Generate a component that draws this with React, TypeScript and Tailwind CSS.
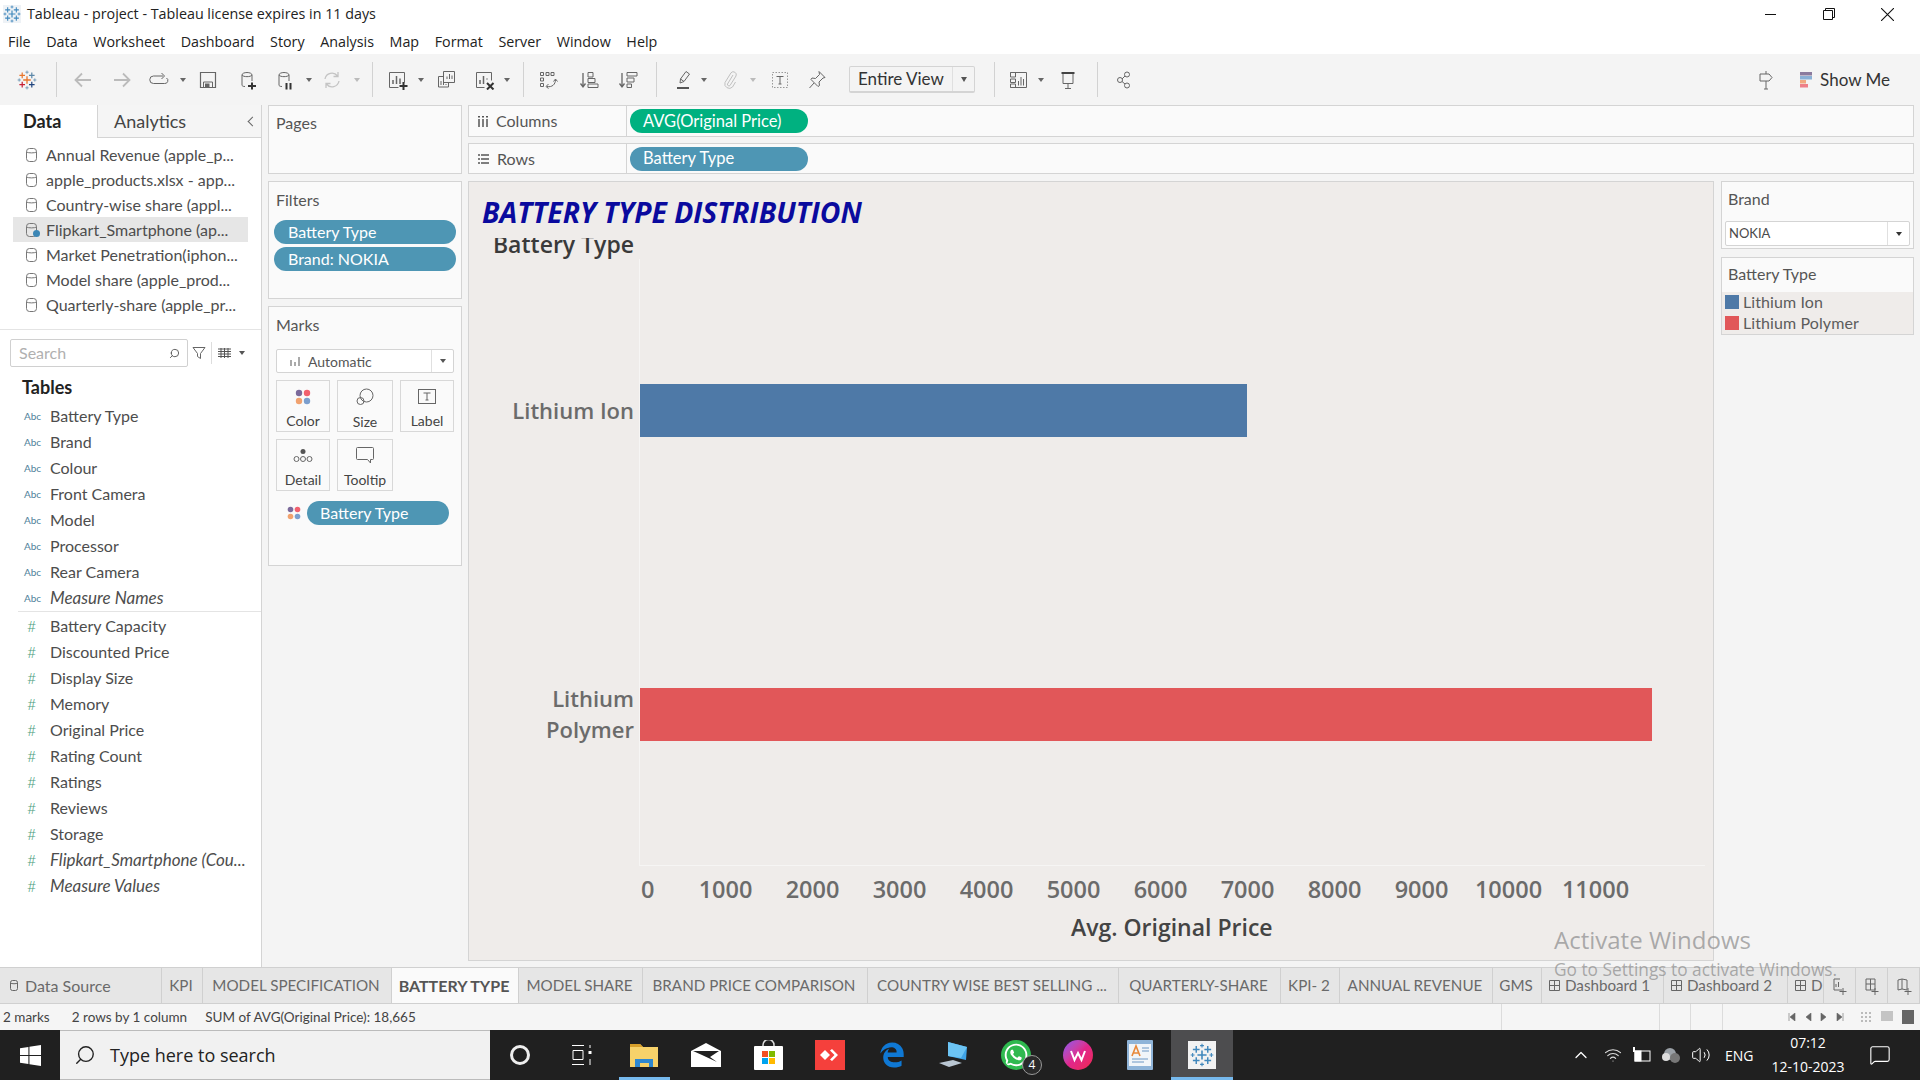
import React from 'react';
import { Search, ChevronUp, Volume2, Wifi, MessageSquare } from 'lucide-react';
import { FaWhatsapp, FaEdgeLegacy } from 'react-icons/fa';

// ---- data ----------------------------------------------------------------
const SOURCES = [
  'Annual Revenue (apple_p...',
  'apple_products.xlsx - app...',
  'Country-wise share (appl...',
  'Flipkart_Smartphone (ap...',
  'Market Penetration(iphon...',
  'Model share (apple_prod...',
  'Quarterly-share (apple_pr...',
];
const DIMENSIONS = ['Battery Type', 'Brand', 'Colour', 'Front Camera', 'Model', 'Processor', 'Rear Camera'];
const MEASURES = [
  'Battery Capacity',
  'Discounted Price',
  'Display Size',
  'Memory',
  'Original Price',
  'Rating Count',
  'Ratings',
  'Reviews',
  'Storage',
];
const MENU = ['File', 'Data', 'Worksheet', 'Dashboard', 'Story', 'Analysis', 'Map', 'Format', 'Server', 'Window', 'Help'];
const TICKS = ['1000', '2000', '3000', '4000', '5000', '6000', '7000', '8000', '9000', '10000', '11000'];
const TABS = [
  { label: 'KPI', w: 'w-[41px]' },
  { label: 'MODEL SPECIFICATION', w: 'w-[189px]' },
  { label: 'BATTERY TYPE', w: 'w-[127px]', active: true },
  { label: 'MODEL SHARE', w: 'w-[124px]' },
  { label: 'BRAND PRICE COMPARISON', w: 'w-[225px]' },
  { label: 'COUNTRY WISE BEST SELLING ...', w: 'w-[251px]' },
  { label: 'QUARTERLY-SHARE', w: 'w-[162px]' },
  { label: 'KPI- 2', w: 'w-[59px]' },
  { label: 'ANNUAL REVENUE', w: 'w-[153px]' },
  { label: 'GMS', w: 'w-[49px]' },
];

// ---- small drawings --------------------------------------------------------
const Ico: React.FC<{ ml: string; children: React.ReactNode; stroke?: string }> = ({ ml, children, stroke = '#666' }) => (
  <svg viewBox="0 0 20 20" fill="none" stroke={stroke} strokeWidth="1" className={`w-5 h-5 shrink-0 ${ml}`}>
    {children}
  </svg>
);
const Caret: React.FC<{ ml: string; light?: boolean }> = ({ ml, light }) => (
  <div className={`w-2 shrink-0 flex justify-center ${ml}`}>
    <div className={`w-0 h-0 border-x-[3px] border-x-transparent border-t-[4px] ${light ? 'border-t-[#bbb]' : 'border-t-[#666]'}`} />
  </div>
);
const Sep: React.FC<{ ml: string }> = ({ ml }) => <div className={`w-px h-[35px] bg-[#d2d2d2] shrink-0 ${ml}`} />;

const Dots: React.FC<{ size?: string }> = ({ size = 'w-[16px] h-[16px]' }) => (
  <svg viewBox="0 0 16 16" className={size}>
    <circle cx="4" cy="4" r="3.2" fill="#7b6a9b" />
    <circle cx="12" cy="4" r="3.2" fill="#f1616f" />
    <circle cx="4" cy="12" r="3.2" fill="#f1a26f" />
    <circle cx="12" cy="12" r="3.2" fill="#7c9fce" />
  </svg>
);

const TableauLogo: React.FC<{ className?: string; mono?: boolean }> = ({ className, mono }) => {
  const cross = (cx: number, cy: number, r: number, color: string, w: number) => (
    <path d={`M${cx - r} ${cy}H${cx + r}M${cx} ${cy - r}V${cy + r}`} stroke={color} strokeWidth={w} />
  );
  const m = '#3f87bc';
  return (
    <svg viewBox="0 0 20 20" className={className} fill="none">
      {cross(10, 10, 3.8, mono ? m : '#e8762c', 1.3)}
      {cross(5.2, 5.4, 2.8, mono ? m : '#e8762c', 1.2)}
      {cross(14.8, 5.4, 2.8, mono ? m : '#5b87a8', 1.2)}
      {cross(5.2, 14.6, 2.8, mono ? m : '#c72035', 1.2)}
      {cross(14.8, 14.6, 2.8, mono ? m : '#1f447e', 1.2)}
      {cross(10, 2.2, 1.6, mono ? m : '#7099b5', 0.9)}
      {cross(10, 17.8, 1.6, mono ? m : '#7099b5', 0.9)}
      {cross(2.2, 10, 1.6, mono ? m : '#7099b5', 0.9)}
      {cross(17.8, 10, 1.6, mono ? m : '#7099b5', 0.9)}
    </svg>
  );
};

const Cylinder: React.FC<{ check?: boolean }> = ({ check }) => (
  <div className="relative w-[11px] h-[14px] shrink-0">
    <svg viewBox="0 0 11 14" fill="none" stroke="#777" strokeWidth="1" className="w-[11px] h-[14px]">
      <rect x="0.5" y="0.5" width="10" height="13" rx="3" />
      <path d="M0.5 4c2 1.2 8 1.2 10 0" />
    </svg>
    {check && <div className="absolute -right-[3px] bottom-0 w-[7px] h-[7px] rounded-full bg-[#3b86b5]" />}
  </div>
);

// ---- toolbar ---------------------------------------------------------------
const Toolbar = () => (
  <div className="h-[51px] bg-[#f4f4f4] flex items-center shrink-0">
    <TableauLogo className="w-5 h-5 shrink-0 ml-[17px]" />
    <Sep ml="ml-[19px]" />
    <Ico ml="ml-[16px]" stroke="#bbb"><path d="M18 10H2.500M9 3.500L2.500 10 9 16.500" strokeWidth="1.800" /></Ico>
    <Ico ml="ml-[19px]" stroke="#bbb"><path d="M2 10h15.500M11 3.500l6.500 6.500-6.500 6.500" strokeWidth="1.800" /></Ico>
    <Ico ml="ml-[17px]"><path d="M14 6H4.500a3 3 0 0 0 0 7.500h11a3 3 0 0 0 2-5.500" /><path d="M12.500 3l3 3-3 3" /></Ico>
    <Caret ml="ml-[10px]" />
    <Ico ml="ml-[11px]"><path d="M2.500 2.500h15v15h-15z" strokeWidth="1.200" /><path d="M5.500 17v-5h9v5" /><rect x="7.500" y="14" width="3.500" height="3" fill="#666" /></Ico>
    <Ico ml="ml-[20px]"><path d="M4 5c0-3.300 10-3.300 10 0v6M4 5v10c0 1 1 1.500 3 1.500M4 5c1 2.200 9 2.200 10 0" /><path d="M10 16h8M14 12.500v7" stroke="#333" strokeWidth="2" /></Ico>
    <Ico ml="ml-[17px]"><path d="M4 5c0-3.300 10-3.300 10 0v6M4 5v10c0 1 1 1.500 3 1.500M4 5c1 2.200 9 2.200 10 0" /><path d="M11.500 13v6.500M15.500 13v6.500" stroke="#333" strokeWidth="2" /></Ico>
    <Caret ml="ml-[10px]" />
    <Ico ml="ml-[9px]" stroke="#c4c4c4"><path d="M3 9a7 7 0 0 1 12.500-3M17 11a7 7 0 0 1-12.500 3M16 2v4.500h-4.500M4 18v-4.500h4.500" strokeWidth="1.300" /></Ico>
    <Caret ml="ml-[11px]" light />
    <Sep ml="ml-[11px]" />
    <Ico ml="ml-[15px]"><path d="M1.500 2.500h15v10M1.500 2.500v15h9" /><path d="M5 14V10M8.500 14V6M12 14V8.500" strokeWidth="1.500" /><path d="M11.500 16h8M15.500 12v8" stroke="#333" strokeWidth="2" /></Ico>
    <Caret ml="ml-[9px]" />
    <Ico ml="ml-[11px]"><path d="M7.500 1.500h11v11h-11zM7.500 6.500h-5v10.500h10v-4.500M11 9V6.500M13.500 9V4M16 9V5.500M5 15v-4M7.500 15v-3M10 15v-1" /></Ico>
    <Ico ml="ml-[19px]"><path d="M1.500 2.500h15v8M1.500 2.500v15h8" /><path d="M5 14V10M8.500 14V6M12 9.500V8.500" strokeWidth="1.500" /><path d="M12 13l6.500 6.500M18.500 13L12 19.500" stroke="#333" strokeWidth="2" /></Ico>
    <Caret ml="ml-[8px]" />
    <Sep ml="ml-[12px]" />
    <Ico ml="ml-[14px]"><path d="M2.500 2.500h3v3h-3zM8 2.500h3v3H8zM13 2.500h3v3h-3zM2.500 8h3v3h-3zM2.500 13.500h3v3h-3z" /><path d="M9 16.500c5 1 8.500-2 8.500-7M15.500 11.500l2-2.500 2 2.500M10.500 14l-2.500 2.500 2.500 2" /></Ico>
    <Ico ml="ml-[21px]"><path d="M4 3v14M1.500 13.500L4 17l2.500-3.500" strokeWidth="1.300" /><path d="M9 2.500h5v4.500H9zM9 8.500h7v4H9zM9 14h10v3.500H9z" /></Ico>
    <Ico ml="ml-[19px]"><path d="M4 3v14M1.500 13.500L4 17l2.500-3.500" strokeWidth="1.300" /><path d="M9 2.500h10v3.500H9zM9 8h7v4H9zM9 14h4.500v3.500H9z" /></Ico>
    <Sep ml="ml-[18px]" />
    <Ico ml="ml-[16px]"><path d="M7 13l.5-4L13 1.500l3.500 2.500L11 11.500zM7.500 9l3.500 2.500" strokeWidth="1" /><path d="M4 18h12" stroke="#555" strokeWidth="2" /></Ico>
    <Caret ml="ml-[7px]" />
    <Ico ml="ml-[12px]" stroke="#c0c0c0"><path d="M13 5l-5.500 9a1.500 1.500 0 0 0 2.500 1.500L16 6a3 3 0 0 0-5-3.200L5 12.500a4.500 4.500 0 0 0 7.500 4.500l3-5" /></Ico>
    <Caret ml="ml-[9px]" light />
    <Ico ml="ml-[13px]"><path d="M2.500 2.500h15v15h-15z" strokeDasharray="1.500 1.500" stroke="#999" /><path d="M6.500 6.500h7M10 6.500V14M8.500 14h3" /></Ico>
    <Ico ml="ml-[17px]"><path d="M12 1.500l6 6-2 .5-4 4 .5 3.500-1.500 1-7-7 1-1.500 3.500.5 4-4zM7 13l-4.500 5" /></Ico>
    <div className="ml-[22px] w-[126px] h-[27px] shrink-0 flex items-center border border-[#d4d4d4] border-b-2 rounded-[2px] text-[17px] text-[#333] font-['Lato',sans-serif]">
      <span className="flex-1 pl-[8px]">Entire View</span>
      <div className="w-[22px] h-full border-l border-[#e0e0e0] flex items-center justify-center">
        <div className="w-0 h-0 border-x-[3px] border-x-transparent border-t-[5px] border-t-[#555]" />
      </div>
    </div>
    <Sep ml="ml-[19px]" />
    <Ico ml="ml-[14px]"><path d="M1.500 2.500h16v15h-16M1.500 2.500h5v4.500h-5zM1.500 9h5v3.500h-5zM1.500 14h5v3.500h-5zM9.500 15.500V11M12 15.500V7M14.500 15.500V9" /></Ico>
    <Caret ml="ml-[8px]" />
    <Ico ml="ml-[13px]"><path d="M5 3v10.500h10V3M10 13.500v4.500M7 18.500h6" /><path d="M3.500 3h13" stroke="#444" strokeWidth="2" /></Ico>
    <Sep ml="ml-[19px]" />
    <Ico ml="ml-[16px]"><circle cx="6" cy="10" r="2.500" /><circle cx="13" cy="4.500" r="2.500" /><circle cx="13" cy="15.500" r="2.500" /><path d="M8 9l3-3M8 11.500l3 2.500" /></Ico>
    <Ico ml="ml-auto"><path d="M10 1v3M4 4h9l3 3.500-3 3.500H4zM10 11v8M8 19h4" /></Ico>
    <svg viewBox="0 0 12 16" className="w-[12px] h-[16px] ml-[24px] shrink-0">
      <rect width="12" height="3.500" fill="#8b7b9e" />
      <rect y="4" width="12" height="3.500" fill="#8ab0d6" />
      <rect y="8" width="6" height="3.500" fill="#f1a97f" />
      <rect y="12" width="8" height="3.500" fill="#ee7f88" />
    </svg>
    <span className="ml-[8px] mr-[30px] text-[17px] text-[#333] font-['Lato',sans-serif]">Show Me</span>
  </div>
);

// ---- left data pane --------------------------------------------------------
const DataPane = () => (
  <div className="w-[262px] shrink-0 bg-white border-r border-[#d4d4d4] flex flex-col text-[16px] text-[#4d4d4d] font-['Lato',sans-serif]">
    <div className="h-[33px] flex shrink-0">
      <div className="w-[97px] pl-[23px] flex items-center text-[18px] font-bold text-[#222]">Data</div>
      <div className="flex-1 flex items-center justify-between pl-[16px] pr-[5px] bg-[#f5f5f5] border-l border-b border-[#d4d4d4] text-[18px] text-[#444]">
        Analytics
        <span className="w-[7px] h-[7px] border-l border-b border-[#666] rotate-45" />
      </div>
    </div>
    <div className="h-[192px] pt-[4px] border-b border-[#e4e4e4] shrink-0">
      {SOURCES.map((s, i) => (
        <div
          key={s}
          className={`h-[25px] ml-[13px] w-[235px] pl-[13px] flex items-center gap-[9px] whitespace-nowrap ${i === 3 ? 'bg-[#e6e6e6]' : ''}`}
        >
          <Cylinder check={i === 3} />
          {s}
        </div>
      ))}
    </div>
    <div className="flex items-center mt-[9px] pl-[10px] shrink-0">
      <div className="w-[178px] h-[28px] border border-[#d0d0d0] rounded-[2px] flex items-center justify-between pl-[8px] pr-[7px] text-[#b0b0b0]">
        Search
        <Search size={11} className="text-[#555] -scale-x-100" />
      </div>
      <svg viewBox="0 0 14 14" fill="none" stroke="#666" className="w-[14px] h-[14px] ml-[4px]"><path d="M1 1.500h12L8.500 7.500v5l-3-2v-3z" /></svg>
      <div className="w-px h-[22px] bg-[#ddd] ml-[5px]" />
      <svg viewBox="0 0 13 10" fill="none" stroke="#555" className="w-[13px] h-[10px] ml-[6px]"><path d="M0 1h13M0 3.500h13M0 6h13M0 8.500h13M3 0v10M6.500 0v10M10 0v10" strokeWidth="1" /></svg>
      <div className="ml-[8px] w-0 h-0 border-x-[3.5px] border-x-transparent border-t-[4px] border-t-[#555]" />
    </div>
    <div className="pl-[22px] mt-[7px] h-[26px] flex items-center text-[18px] font-bold text-[#222] shrink-0">Tables</div>
    <div className="pt-[3px] ml-[18px] border-b border-[#e4e4e4] shrink-0">
      {DIMENSIONS.map(d => (
        <div key={d} className="h-[26px] flex items-center whitespace-nowrap">
          <span className="w-[32px] pl-[6px] text-[10px] text-[#4f7f9a]">Abc</span>
          {d}
        </div>
      ))}
      <div className="h-[26px] flex items-center italic text-[17px]">
        <span className="w-[32px] pl-[6px] text-[10px] text-[#4f7f9a] not-italic">Abc</span>
        Measure Names
      </div>
    </div>
    <div className="pl-[26px] pt-[1px]">
      {MEASURES.map(m => (
        <div key={m} className="h-[26px] flex items-center whitespace-nowrap">
          <span className="w-[24px] pl-[1px] text-[#4a9d7c] text-[16px] font-light">#</span>
          {m}
        </div>
      ))}
      <div className="h-[26px] flex items-center italic whitespace-nowrap text-[17px]">
        <span className="w-[24px] pl-[1px] text-[#4a9d7c] text-[16px] font-light not-italic">#</span>
        Flipkart_Smartphone (Cou...
      </div>
      <div className="h-[26px] flex items-center italic text-[17px]">
        <span className="w-[24px] pl-[1px] text-[#4a9d7c] text-[16px] font-light not-italic">#</span>
        Measure Values
      </div>
    </div>
  </div>
);

// ---- shelves ---------------------------------------------------------------
const Pill: React.FC<{ label: string; className: string }> = ({ label, className }) => (
  <div className={`h-[24px] rounded-full flex items-center text-white shrink-0 ${className}`}>{label}</div>
);

const MarkBtn: React.FC<{ label: string; w: string; children: React.ReactNode }> = ({ label, w, children }) => (
  <div className={`${w} h-[52px] border border-[#d8d8d8] bg-[#fafafa] flex flex-col items-center pt-[7px] text-[14px] text-[#444]`}>
    <div className="h-[20px] flex items-center justify-center">{children}</div>
    <span className="mt-[5px]">{label}</span>
  </div>
);

const ShelfColumn = () => (
  <div className="w-[206px] shrink-0 pl-[6px] pr-[6px] flex flex-col gap-[7px] text-[16px] text-[#555] font-['Lato',sans-serif]">
    <div className="h-[69px] border border-[#d4d4d4] bg-[#fafafa] pl-[7px] pt-[5px] shrink-0">Pages</div>
    <div className="h-[118px] border border-[#d4d4d4] bg-[#fafafa] pt-[6px] shrink-0">
      <div className="pl-[7px] h-[22px]">Filters</div>
      <div className="px-[5px] mt-[10px] flex flex-col gap-[3px]">
        <Pill label="Battery Type" className="pl-[14px] bg-[#4e96b4] text-[16px]" />
        <Pill label="Brand: NOKIA" className="pl-[14px] bg-[#4e96b4] text-[16px]" />
      </div>
    </div>
    <div className="h-[260px] border border-[#d4d4d4] bg-[#fafafa] pt-[6px] shrink-0">
      <div className="pl-[7px] h-[22px]">Marks</div>
      <div className="ml-[7px] mt-[14px] w-[178px] h-[24px] border border-[#d4d4d4] rounded-[2px] bg-white flex items-center text-[14px]">
        <svg viewBox="0 0 10 10" className="w-[10px] h-[10px] ml-[13px] mr-[8px]" fill="#aaa"><path d="M0 4h2v6H0zM4 6h2v4H4zM8 1h2v9H8z" /></svg>
        <span className="flex-1">Automatic</span>
        <div className="w-[22px] h-full border-l border-[#e0e0e0] flex items-center justify-center">
          <div className="w-0 h-0 border-x-[3.5px] border-x-transparent border-t-[4px] border-t-[#555]" />
        </div>
      </div>
      <div className="ml-[7px] mt-[7px] flex gap-[7px]">
        <MarkBtn label="Color" w="w-[54px]"><Dots /></MarkBtn>
        <MarkBtn label="Size" w="w-[56px]">
          <svg viewBox="0 0 18 18" fill="none" stroke="#666" className="w-[18px] h-[18px]"><circle cx="10.500" cy="7.500" r="6.500" /><circle cx="4.500" cy="13" r="3.500" /></svg>
        </MarkBtn>
        <MarkBtn label="Label" w="w-[54px]">
          <svg viewBox="0 0 18 16" fill="none" stroke="#666" className="w-[18px] h-[16px]"><rect x="0.500" y="0.500" width="17" height="14" /><path d="M5.500 4h7M9 4v7M7.500 11h3" /></svg>
        </MarkBtn>
      </div>
      <div className="ml-[7px] mt-[7px] flex gap-[7px]">
        <MarkBtn label="Detail" w="w-[54px]">
          <svg viewBox="0 0 20 16" fill="none" stroke="#666" className="w-[20px] h-[16px]"><circle cx="10" cy="3.500" r="2.500" fill="#555" stroke="none" /><circle cx="3.500" cy="11" r="2.500" /><circle cx="10" cy="11" r="2.500" /><circle cx="16.500" cy="11" r="2.500" /></svg>
        </MarkBtn>
        <MarkBtn label="Tooltip" w="w-[56px]">
          <svg viewBox="0 0 18 17" fill="none" stroke="#666" className="w-[18px] h-[17px]"><path d="M1.500 0.500h15a1 1 0 0 1 1 1v10a1 1 0 0 1-1 1h-2v3.500l-3-3.500h-10a1 1 0 0 1-1-1v-10a1 1 0 0 1 1-1z" /></svg>
        </MarkBtn>
      </div>
      <div className="mt-[10px] ml-[18px] flex items-center gap-[6px]">
        <Dots size="w-[14px] h-[14px]" />
        <Pill label="Battery Type" className="pl-[13px] w-[142px] bg-[#4e96b4] text-[16px]" />
      </div>
    </div>
  </div>
);

const Shelf: React.FC<{ label: string; icon: React.ReactNode; h: string; pill: string; color: string }> = ({ label, icon, h, pill, color }) => (
  <div className={`${h} shrink-0 border border-[#d4d4d4] bg-[#fafafa] flex items-center font-['Lato',sans-serif] text-[16px] text-[#555]`}>
    <div className="w-[158px] h-full border-r border-[#d4d4d4] flex items-center pl-[9px] gap-[8px]">
      {icon}
      {label}
    </div>
    <Pill label={pill} className={`ml-[3px] pl-[13px] w-[178px] text-[16.5px] ${color}`} />
  </div>
);

// ---- viz -------------------------------------------------------------------
const BarRow: React.FC<{ bar: string; children: React.ReactNode }> = ({ bar, children }) => (
  <div className="flex-1 flex items-center">
    <div className="w-[171px] pr-[6px] text-right text-[22px] leading-[31px] font-semibold text-[#6b6b6b]">{children}</div>
    <div className={`h-[53px] ${bar}`} />
  </div>
);

const Viz = () => (
  <div className="flex-1 bg-[#efecea] border border-[#d4d4d4] flex flex-col font-['Open_Sans',sans-serif] overflow-hidden">
    <div className="h-[56px] pt-[14px] pl-[13px] shrink-0 text-[28.3px] leading-[32px] font-bold italic text-[#0a0a9e] whitespace-nowrap">
      BATTERY TYPE DISTRIBUTION
    </div>
    <div className="h-[21px] w-[165px] shrink-0 overflow-hidden flex items-end justify-end text-[23px] leading-[30px] font-semibold text-[#3a3a3a] whitespace-nowrap">
      <span className="shrink-0">Battery Type</span>
    </div>
    <div className="h-[607px] shrink-0 flex flex-col relative">
      <div className="absolute left-[170px] top-0 bottom-0 w-px bg-[#f6f5f4]" />
      <div className="absolute left-[170px] right-[8px] bottom-0 h-px bg-[#f6f5f4]" />
      <BarRow bar="w-[607px] bg-[#4e79a7]">Lithium Ion</BarRow>
      <BarRow bar="w-[1012px] bg-[#e15759]">Lithium<br />Polymer</BarRow>
    </div>
    <div className="flex pl-[171px] mt-[8px] text-[23.5px] leading-[31px] font-semibold text-[#6b6b6b] shrink-0">
      <span className="w-[42px] pl-[1px]">0</span>
      {TICKS.map(t => (
        <span key={t} className="w-[87px] text-center shrink-0">{t}</span>
      ))}
    </div>
    <div className="mt-[7px] pl-[602px] text-[23px] leading-[30px] font-semibold text-[#444] whitespace-nowrap">Avg. Original Price</div>
  </div>
);

const SidePanel = () => (
  <div className="w-[193px] shrink-0 flex flex-col gap-[8px] font-['Lato',sans-serif] text-[16px] text-[#555]">
    <div className="h-[68px] border border-[#d4d4d4] bg-[#fafafa] shrink-0">
      <div className="pl-[6px] pt-[5px] h-[39px]">Brand</div>
      <div className="mx-[3px] h-[25px] border border-[#d4d4d4] rounded-[2px] bg-white flex items-center text-[13px] text-[#4a4a4a]">
        <span className="flex-1 pl-[3px]">NOKIA</span>
        <div className="w-[22px] h-full border-l border-[#e0e0e0] flex items-center justify-center">
          <div className="w-0 h-0 border-x-[3.500px] border-x-transparent border-t-[4px] border-t-[#333]" />
        </div>
      </div>
    </div>
    <div className="h-[78px] border border-[#d4d4d4] bg-[#fafafa] shrink-0 flex flex-col">
      <div className="pl-[6px] pt-[4px] h-[34px] shrink-0">Battery Type</div>
      <div className="flex-1 bg-[#efecea] pl-[3px] text-[#5c5c5c] tracking-[0.1px]">
        <div className="h-[21px] -mt-px flex items-center gap-[4px]"><div className="w-[14px] h-[14px] bg-[#4e79a7]" />Lithium Ion</div>
        <div className="h-[21px] flex items-center gap-[4px]"><div className="w-[14px] h-[14px] bg-[#e15759]" />Lithium Polymer</div>
      </div>
    </div>
  </div>
);

// ---- bottom bars -----------------------------------------------------------
const DashTab: React.FC<{ label: string; w: string }> = ({ label, w }) => (
  <div className={`${w} shrink-0 h-full flex items-center pl-[7px] gap-[5px] border-r border-[#d0d0d0] whitespace-nowrap overflow-hidden`}>
    <svg viewBox="0 0 11 11" fill="none" stroke="#666" className="w-[11px] h-[11px] shrink-0"><path d="M.5.500h10v10H.500zM5.500.500v10M.5 5.500h10" /></svg>
    {label}
  </div>
);

const TabStrip = () => (
  <div className="h-[37px] shrink-0 bg-[#e6e6e6] border-y border-[#d0d0d0] flex items-center text-[15.2px] text-[#6a6a6a] font-['Lato',sans-serif]">
    <div className="w-[162px] h-full flex items-center pl-[10px] gap-[7px] border-r border-[#d0d0d0] text-[16px]">
      <svg viewBox="0 0 8 11" fill="none" stroke="#666" className="w-[8px] h-[11px]"><rect x="0.500" y="0.500" width="7" height="10" rx="2" /><path d="M.5 3c1.500 1 5.500 1 7 0" /></svg>
      Data Source
    </div>
    {TABS.map(t => (
      <div
        key={t.label}
        className={`${t.w} h-full flex items-center justify-center pr-[2px] shrink-0 border-r border-[#d0d0d0] whitespace-nowrap ${t.active ? 'bg-[#fafafa] font-bold text-[#555] text-[16px]' : ''}`}
      >
        {t.label}
      </div>
    ))}
    <DashTab label="Dashboard 1" w="w-[122px]" />
    <DashTab label="Dashboard 2" w="w-[124px]" />
    <DashTab label="D" w="w-[36px]" />
    {['M9 3H3v11h8M5 11V8M7.500 11V6M12 12v7M8.500 15.500h7', 'M3 3h9v11H3zM3 8h9M7.500 3v11M12 12v7M8.500 15.500h7', 'M3 4l4-1 5 1v10l-5-1-4 1zM7 3v10M13 12v7M9.500 15.500h7'].map(d => (
      <div key={d} className="w-[32px] h-full flex items-center justify-center border-r border-[#d0d0d0] shrink-0">
        <svg viewBox="0 0 18 20" fill="none" stroke="#666" className="w-[18px] h-[20px]"><path d={d} /></svg>
      </div>
    ))}
  </div>
);

const StatusBar = () => (
  <div className="h-[26px] shrink-0 bg-[#f5f5f5] flex items-center text-[13.5px] text-[#444] font-['Lato',sans-serif]">
    <span className="ml-[3px]">2 marks</span>
    <span className="ml-[22px]">2 rows by 1 column</span>
    <span className="ml-[18px]">SUM of AVG(Original Price): 18,665</span>
    <div className="ml-auto flex items-center h-full">
      <div className="w-[158px] h-full border-l border-[#dcdcdc]" />
      <div className="w-[31px] h-full border-l border-[#dcdcdc]" />
      <div className="w-[32px] h-full border-l border-[#dcdcdc]" />
      <div className="w-[128px] h-full border-l border-[#dcdcdc] flex items-center justify-end gap-[8px] pr-[6px]">
        {['M1 0v8M7 0v8L2 4z', 'M7 0v8L2 4z', 'M1 0v8l5-4z', 'M7 0v8M1 0v8l5-4z'].map(d => (
          <svg key={d} viewBox="0 0 8 8" fill="#666" stroke="#666" strokeWidth="0.600" className="w-[8px] h-[8px]"><path d={d} /></svg>
        ))}
      </div>
      <div className="w-[70px] h-full flex items-center justify-end gap-[9px] pr-[6px]">
        <div className="w-[12px] h-[12px] bg-[radial-gradient(circle,#bbb_1.500px,transparent_1.500px)] bg-[length:4px_4px]" />
        <div className="w-[12px] h-[12px] bg-[#c4c4c4] border-b-2 border-[#f5f5f5]" />
        <div className="w-[12px] h-[14px] bg-[#666]" />
      </div>
    </div>
  </div>
);

const Cell: React.FC<{ children: React.ReactNode; active?: boolean; open?: boolean }> = ({ children, active, open }) => (
  <div className={`relative w-[62px] h-full flex items-center justify-center shrink-0 ${active ? 'bg-[#4d4d4f]' : ''}`}>
    {children}
    {active && <div className="absolute bottom-0 inset-x-0 h-[3px] bg-[#76b9ed]" />}
    {open && <div className="absolute bottom-0 left-[6px] right-[5px] h-[3px] bg-[#76b9ed]" />}
  </div>
);

const Taskbar = () => (
  <div className="h-[50px] shrink-0 bg-[#202020] flex items-center font-['Open_Sans',sans-serif] text-white">
    <div className="w-[60px] h-full flex items-center justify-center">
      <svg viewBox="0 0 20 20" fill="#fff" className="w-[21px] h-[21px]"><path d="M0 3l8-1.100V9.500H0zM9 1.700L20 0v9.500H9zM0 10.500h8v7.600L0 17zM9 10.500h11V20L9 18.300z" /></svg>
    </div>
    <div className="w-[430px] h-full bg-[#f1f1f1] border-y border-[#bbb] flex items-center text-[#222] text-[18px]">
      <Search size={22} strokeWidth={1.500} className="ml-[14px] mr-[14px] text-[#222] -scale-x-100" />
      Type here to search
    </div>
    <div className="h-full flex -ml-px">
      <Cell><div className="w-[20px] h-[20px] rounded-full border-[3px] border-[#eee]" /></Cell>
      <Cell>
        <svg viewBox="0 0 20 20" fill="none" stroke="#fff" className="w-[20px] h-[20px]"><path d="M0 .500h12M0 19.500h12M1 5.500h10v9H1zM18 0v3M18 14v6" /><rect x="16.500" y="6" width="3" height="3" fill="#fff" stroke="none" /></svg>
      </Cell>
      <Cell open>
        <svg viewBox="0 0 28 24" className="w-[28px] h-[24px]"><path d="M0 1h10l3 3h15v20H0z" fill="#f7d26a" /><path d="M0 1h10l3 3H0z" fill="#d79f2a" /><path d="M5 24v-8h18v8h-4v-4H10v4z" fill="#2f88d0" /></svg>
      </Cell>
      <Cell>
        <svg viewBox="0 0 30 24" className="w-[30px] h-[24px]"><path d="M0 8L15 0l15 8v16H0z" fill="#fff" /><path d="M2 8h26L19 14l7 5-15-7z" fill="#202020" /></svg>
      </Cell>
      <Cell>
        <svg viewBox="0 0 29 30" className="w-[29px] h-[30px]"><path d="M9 7V5a5 5 0 0 1 11 0v2" fill="none" stroke="#ddd" strokeWidth="1.500" /><rect y="6" width="29" height="24" rx="1" fill="#fff" /><rect x="8" y="11" width="6" height="6" fill="#f25022" /><rect x="15" y="11" width="6" height="6" fill="#7fba00" /><rect x="8" y="18" width="6" height="6" fill="#00a4ef" /><rect x="15" y="18" width="6" height="6" fill="#ffb900" /></svg>
      </Cell>
      <Cell>
        <svg viewBox="0 0 30 30" className="w-[30px] h-[30px]"><rect width="30" height="30" fill="#f5403c" /><path d="M10 10l5 5-5 5-5-5z" fill="#fff" /><path d="M17 9l6 6-6 6-2 -1.500 4.500-4.500-4.500-4.500z" fill="#fff" /></svg>
      </Cell>
      <Cell><FaEdgeLegacy className="w-[26px] h-[26px] text-[#0f78d4]" /></Cell>
      <Cell>
        <svg viewBox="0 0 30 28" className="w-[30px] h-[28px]"><path d="M9 1l19 5-1 13-18-4z" fill="#3fa4e8" /><path d="M9 1l19 5-6 11-13-2z" fill="#6cc4f4" /><path d="M0 22l14-3 9 3-13 4z" fill="#b9c6d2" /></svg>
      </Cell>
      <Cell>
        <div className="relative">
          <FaWhatsapp className="w-[30px] h-[30px] text-white bg-[#2fb94f] rounded-full p-[2px]" />
          <div className="absolute -right-[11px] -bottom-[5px] w-[20px] h-[20px] rounded-full bg-[#2a2a2a] border border-[#999] flex items-center justify-center text-[12px]">4</div>
        </div>
      </Cell>
      <Cell>
        <div className="w-[30px] h-[30px] rounded-full bg-gradient-to-br from-[#8a4df0] via-[#e0268c] to-[#f0264a] flex items-center justify-center">
          <svg viewBox="0 0 20 20" fill="none" stroke="#fff" strokeWidth="2" className="w-[20px] h-[20px]"><path d="M3 6l3.500 9L10 8l3.500 7L17 6" /></svg>
        </div>
      </Cell>
      <Cell>
        <svg viewBox="0 0 26 30" className="w-[26px] h-[30px]"><rect width="26" height="30" rx="1" fill="#8fb4d8" /><rect x="2" y="4" width="22" height="22" fill="#f1f5f9" /><path d="M5 16l4-10 4 10M6.500 13h5" stroke="#e8883a" strokeWidth="1.600" fill="none" /><path d="M15 8h7M15 11h7M5 19h16M5 22h12" stroke="#6c97c4" /></svg>
      </Cell>
      <Cell active>
        <div className="w-[28px] h-[28px] bg-[#f2f2f2] flex items-center justify-center"><TableauLogo mono className="w-[24px] h-[24px]" /></div>
      </Cell>
    </div>
    <div className="ml-auto flex items-center h-full pr-[29px]">
      <ChevronUp size={20} strokeWidth={1.500} />
      <Wifi size={18} strokeWidth={1.500} className="ml-[13px] text-[#ddd]" />
      <svg viewBox="0 0 20 18" fill="none" stroke="#fff" className="ml-[9px] w-[20px] h-[18px]"><rect x="4" y="5" width="15" height="10" /><rect x="4" y="5" width="6" height="10" fill="#fff" /><path d="M3 1v5" strokeWidth="2" /></svg>
      <svg viewBox="0 0 20 18" className="ml-[10px] w-[20px] h-[18px]"><circle cx="9" cy="8" r="6" fill="#9aa0a6" /><circle cx="5" cy="11" r="4" fill="#ddd" /><circle cx="14" cy="12" r="5" fill="#777" /></svg>
      <Volume2 size={20} strokeWidth={1.200} className="ml-[10px]" />
      <span className="ml-[14px] w-[30px] text-[14px]">ENG</span>
      <div className="ml-[8px] w-[90px] flex flex-col items-center text-[14px] leading-[24px] whitespace-nowrap">
        <span>07:12</span>
        <span>12-10-2023</span>
      </div>
      <MessageSquare size={22} strokeWidth={1.200} className="ml-[16px]" />
    </div>
  </div>
);

// ---- page ------------------------------------------------------------------
export default function App() {
  return (
    <div className="relative w-[1920px] h-[1080px] overflow-hidden bg-white flex flex-col">
      {/* Title bar */}
      <div className="h-[27px] shrink-0 flex items-center pt-[1px] font-['Open_Sans',sans-serif] text-[14.3px] text-[#222]">
        <TableauLogo mono className="w-[18px] h-[18px] ml-[3px] mr-[6px] bg-[#eef2f6]" />
        Tableau - project - Tableau license expires in 11 days
        <div className="ml-auto flex items-center pr-[26px]">
          <div className="w-[11px] h-px bg-[#111]" />
          <svg viewBox="0 0 12 12" fill="none" stroke="#111" className="w-[12px] h-[12px] ml-[47px]"><path d="M.5 2.500h9v9h-9zM2.500 2.500v-2h9v9h-2" /></svg>
          <svg viewBox="0 0 12 12" fill="none" stroke="#111" className="w-[13px] h-[13px] ml-[46px]"><path d="M0 0l12 12M12 0L0 12" /></svg>
        </div>
      </div>
      {/* Menu */}
      <div className="h-[27px] shrink-0 flex items-center gap-[15.6px] pl-[8px] pt-[3px] font-['Open_Sans',sans-serif] text-[14.3px] text-[#222]">
        {MENU.map(m => <span key={m}>{m}</span>)}
      </div>
      <Toolbar />
      {/* Workspace */}
      <div className="h-[862px] shrink-0 flex bg-[#f4f4f4]">
        <DataPane />
        <ShelfColumn />
        <div className="flex-1 flex flex-col pr-[6px] min-w-0">
          <Shelf label="Columns" h="h-[32px]" pill="AVG(Original Price)" color="bg-[#00b180]" icon={
            <svg viewBox="0 0 10 11" fill="none" stroke="#555" strokeWidth="1.500" className="w-[10px] h-[11px]"><path d="M1 3v8M5 3v8M9 3v8M0 .700h2M4 .700h2M8 .700h2" /></svg>
          } />
          <div className="h-[6px] shrink-0" />
          <Shelf label="Rows" h="h-[31px]" pill="Battery Type" color="bg-[#4e96b4]" icon={
            <svg viewBox="0 0 11 10" fill="none" stroke="#555" strokeWidth="1.500" className="w-[11px] h-[10px]"><path d="M3 1h8M3 5h8M3 9h8M0 1h2M0 5h2M0 9h2" /></svg>
          } />
          <div className="h-[7px] shrink-0" />
          <div className="h-[780px] flex gap-[7px] shrink-0">
            <Viz />
            <SidePanel />
          </div>
        </div>
      </div>
      <TabStrip />
      <StatusBar />
      <Taskbar />
      {/* Windows activation watermark */}
      <div className="absolute left-[1554px] top-[924px] font-['Open_Sans',sans-serif] text-[#8a8a8a]/70 pointer-events-none whitespace-nowrap">
        <div className="text-[24px] leading-[32px]">Activate Windows</div>
        <div className="text-[17.3px] leading-[22px] mt-[3px]">Go to Settings to activate Windows.</div>
      </div>
    </div>
  );
}
